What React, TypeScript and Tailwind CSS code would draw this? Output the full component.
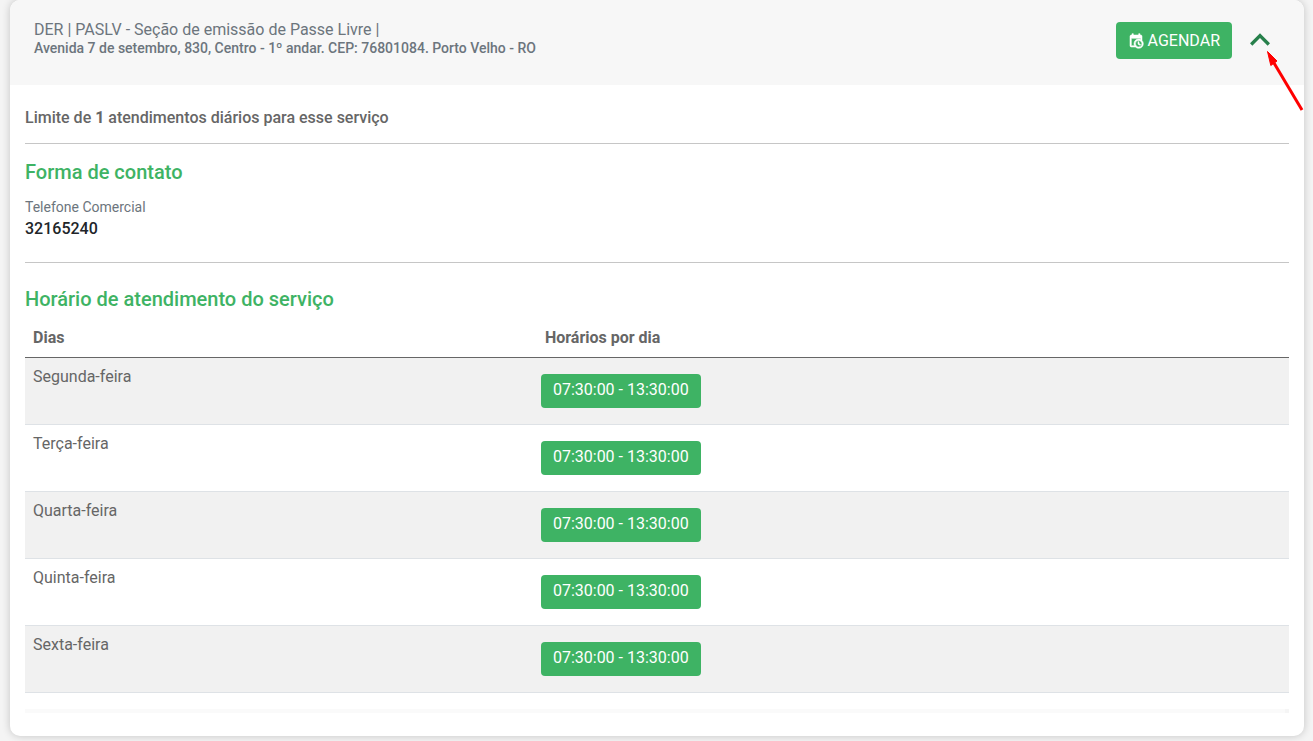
import { useState } from "react";

const days = ["Segunda-feira", "Terça-feira", "Quarta-feira", "Quinta-feira", "Sexta-feira"];

function CalendarClock() {
  return (
    <svg viewBox="0 0 24 24" className="size-4" fill="currentColor" stroke="currentColor" strokeWidth="0.8" aria-hidden="true">
      <path d="M15,13H16.5V15.82L18.94,17.23L18.19,18.53L15,16.69V13M19,8H5V19H9.67C9.24,18.09 9,17.07 9,16A7,7 0 0,1 16,9C17.07,9 18.09,9.24 19,9.67V8M5,21C3.89,21 3,20.1 3,19V5C3,3.89 3.89,3 5,3H6V1H8V3H16V1H18V3H19A2,2 0 0,1 21,5V11.1C22.24,12.36 23,14.09 23,16A7,7 0 0,1 16,23C14.09,23 12.36,22.24 11.1,21H5M16,11.15A4.85,4.85 0 0,0 11.15,16C11.15,18.68 13.32,20.85 16,20.85A4.85,4.85 0 0,0 20.85,16C20.85,13.32 18.68,11.15 16,11.15Z" />
    </svg>
  );
}

export default function App() {
  const [open, setOpen] = useState(true);
  return (
    <div className="min-h-screen bg-[#f4f4f4] px-[10px] pr-[9px] pb-1 font-['Roboto','Liberation_Sans',sans-serif] text-base text-[#666]">
      <article className="rounded-[10px] bg-white shadow-[0_0_8px_rgba(0,0,0,0.2)]">
        <header className="relative flex h-[85px] items-start justify-between rounded-t-[10px] bg-[#f7f7f7] pt-5 pr-6 pl-6 text-[#6c757d]">
          <div>
            <h1 className="leading-[19px]">DER | PASLV - Seção de emissão de Passe Livre |</h1>
            <p className="text-sm leading-[19px] font-medium">
              Avenida 7 de setembro, 830, Centro - 1º andar. CEP: 76801084. Porto Velho - RO
            </p>
          </div>
          <div className="flex items-center gap-2">
            <button type="button" className="flex h-[37px] items-center gap-1 rounded bg-[#3eb364] px-3 pt-px text-white">
              <CalendarClock />
              AGENDAR
            </button>
            <button
              type="button"
              aria-label="Recolher detalhes"
              aria-expanded={open}
              onClick={() => setOpen(!open)}
              className="text-[#27804b]"
            >
              <svg viewBox="0 0 24 24" className="size-10" fill="currentColor" aria-hidden="true">
                <path d="M7.41,15.41L12,10.83L16.59,15.41L18,14L12,8L6,14L7.41,15.41Z" />
              </svg>
            </button>
          </div>
          <svg
            viewBox="0 0 38 60"
            className="absolute top-[51px] right-0 h-[60px] w-[38px]"
            aria-hidden="true"
          >
            <path d="M8 12L36 59" stroke="#f00" strokeWidth="3" />
            <path d="M1.5 0.5L11 10L4.8 14.5Z" fill="#f00" stroke="#f00" />
          </svg>
        </header>

        {open && (
          <div className="px-[15px] pt-[21px] pb-[23px]">
            <p className="border-b border-[#c6c6c6] pb-[13px] leading-6 font-medium">
              Limite de <span className="font-bold">1</span> atendimentos diários para esse serviço
            </p>

            <section className="border-b border-[#c6c6c6] pt-4 pb-[23px]">
              <h2 className="text-xl leading-6 font-medium text-[#3eb364]">Forma de contato</h2>
              <dl className="pt-[13px]">
                <dt className="text-sm leading-[21px] text-[#6c757d]">Telefone Comercial</dt>
                <dd className="leading-[21px] font-medium text-[#212529]">32165240</dd>
              </dl>
            </section>

            <section className="pt-6">
              <h2 className="text-xl leading-6 font-medium text-[#3eb364]">Horário de atendimento do serviço</h2>
              <table className="mt-2 w-full table-fixed border-collapse text-left">
                <thead>
                  <tr className="border-b border-[#666]">
                    <th className="h-[38px] w-[40.5%] px-2 font-bold">Dias</th>
                    <th className="px-2 font-bold">Horários por dia</th>
                  </tr>
                </thead>
                <tbody>
                  {days.map((day) => (
                    <tr key={day} className="h-[67px] border-b border-[#dee2e6] align-top odd:bg-[#f1f1f1]">
                      <td className="px-2 pt-[7px]">{day}</td>
                      <td className="px-1 pt-4">
                        <span className="inline-block h-[34px] rounded bg-[#3eb364] px-3 pt-1 text-white">
                          07:30:00 - 13:30:00
                        </span>
                      </td>
                    </tr>
                  ))}
                </tbody>
              </table>
              <div className="mt-4 h-1 border-r-4 border-[#f5f5f5] bg-[#fafafa]" />
            </section>
          </div>
        )}
      </article>
    </div>
  );
}
